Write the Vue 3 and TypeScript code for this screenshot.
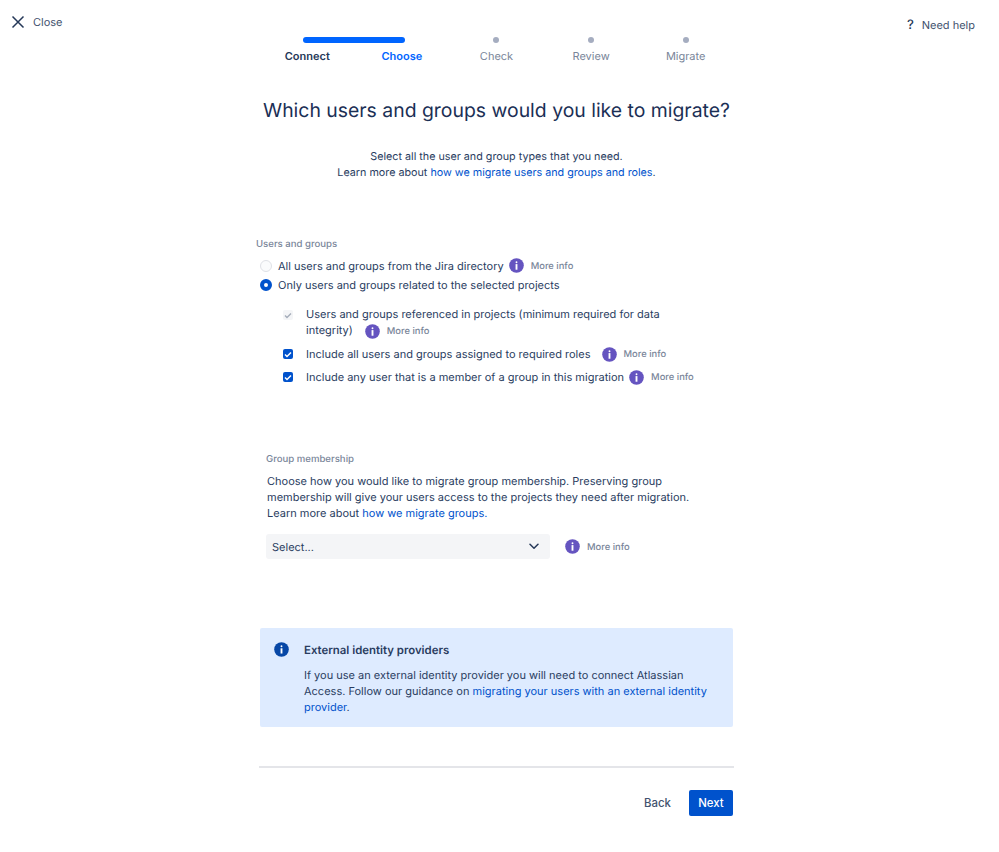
<script setup lang="ts">
const steps = [
  { label: 'Connect', state: 'done' },
  { label: 'Choose', state: 'current' },
  { label: 'Check', state: 'todo' },
  { label: 'Review', state: 'todo' },
  { label: 'Migrate', state: 'todo' },
]
</script>

<template>
  <div class="page">
    <header class="top">
      <a class="close">
        <svg width="14" height="14" viewBox="0 0 14 14"><path d="M1.5 1.5l11 11M12.5 1.5l-11 11" stroke="#253858" stroke-width="1.5" fill="none" /></svg>
        <span>Close</span>
      </a>
      <div class="stepper">
        <div class="track"></div>
        <div v-for="s in steps" :key="s.label" class="step" :class="s.state">
          <i class="dot"></i>
          <span>{{ s.label }}</span>
        </div>
      </div>
      <a class="help"><span class="q">?</span><span>Need help</span></a>
    </header>

    <main class="col">
      <h1>Which users and groups would you like to migrate?</h1>
      <p class="intro">Select all the user and group types that you need.<br />Learn more about <a>how we migrate users and groups and roles</a>.</p>

      <section class="users">
        <div class="label">Users and groups</div>
        <div class="radio-row first">
          <i class="radio"></i>
          <span>All users and groups from the Jira directory</span>
          <span class="info gap-r low"><svg width="15" height="15" viewBox="0 0 16 16"><circle cx="8" cy="8" r="7.8" fill="#6554c0" /><rect x="7" y="3.5" width="2" height="2" rx="1" fill="#fff" /><rect x="7" y="6.5" width="2" height="6" fill="#fff" /></svg><b>More info</b></span>
        </div>
        <div class="radio-row">
          <i class="radio on"></i>
          <span>Only users and groups related to the selected projects</span>
        </div>
        <div class="check-row ref">
          <i class="check off"><svg width="8" height="7" viewBox="0 0 8 7"><path d="M1 3.5l2 2 4-4" stroke="#a5adba" stroke-width="1.4" fill="none" /></svg></i>
          <div>Users and groups referenced in projects (minimum required for data<br />integrity)<span class="info gap-i low"><svg width="15" height="15" viewBox="0 0 16 16"><circle cx="8" cy="8" r="7.8" fill="#6554c0" /><rect x="7" y="3.5" width="2" height="2" rx="1" fill="#fff" /><rect x="7" y="6.5" width="2" height="6" fill="#fff" /></svg><b>More info</b></span></div>
        </div>
        <div class="check-row r2">
          <i class="check"><svg width="8" height="7" viewBox="0 0 8 7"><path d="M1 3.5l2 2 4-4" stroke="#fff" stroke-width="1.5" fill="none" /></svg></i>
          <span>Include all users and groups assigned to required roles</span>
          <span class="info gap-a"><svg width="15" height="15" viewBox="0 0 16 16"><circle cx="8" cy="8" r="7.8" fill="#6554c0" /><rect x="7" y="3.5" width="2" height="2" rx="1" fill="#fff" /><rect x="7" y="6.5" width="2" height="6" fill="#fff" /></svg><b>More info</b></span>
        </div>
        <div class="check-row r3">
          <i class="check"><svg width="8" height="7" viewBox="0 0 8 7"><path d="M1 3.5l2 2 4-4" stroke="#fff" stroke-width="1.5" fill="none" /></svg></i>
          <span>Include any user that is a member of a group in this migration</span>
          <span class="info gap-b"><svg width="15" height="15" viewBox="0 0 16 16"><circle cx="8" cy="8" r="7.8" fill="#6554c0" /><rect x="7" y="3.5" width="2" height="2" rx="1" fill="#fff" /><rect x="7" y="6.5" width="2" height="6" fill="#fff" /></svg><b>More info</b></span>
        </div>
      </section>

      <section class="groups">
        <div class="label">Group membership</div>
        <p>Choose how you would like to migrate group membership. Preserving group<br />membership will give your users access to the projects they need after migration.<br />Learn more about <a>how we migrate groups.</a></p>
        <div class="select-row">
          <div class="select">
            <span>Select...</span>
            <svg width="10" height="7" viewBox="0 0 10 7"><path d="M1 1.2L5 5.2l4-4" stroke="#253858" stroke-width="1.5" fill="none" stroke-linecap="round" stroke-linejoin="round" /></svg>
          </div>
          <span class="info low"><svg width="15" height="15" viewBox="0 0 16 16"><circle cx="8" cy="8" r="7.8" fill="#6554c0" /><rect x="7" y="3.5" width="2" height="2" rx="1" fill="#fff" /><rect x="7" y="6.5" width="2" height="6" fill="#fff" /></svg><b>More info</b></span>
        </div>
      </section>

      <section class="banner">
        <svg class="b-icon" width="15" height="15" viewBox="0 0 16 16"><circle cx="8" cy="8" r="7.8" fill="#0747a6" /><rect x="7" y="3.5" width="2" height="2" rx="1" fill="#fff" /><rect x="7" y="6.7" width="2" height="5.6" fill="#fff" /></svg>
        <div>
          <h2>External identity providers</h2>
          <p>If you use an external identity provider you will need to connect Atlassian<br />Access. Follow our guidance on <a>migrating your users with an external identity<br />provider</a>.</p>
        </div>
      </section>

      <footer class="foot">
        <button class="back">Back</button>
        <button class="next">Next</button>
      </footer>
    </main>
  </div>
</template>

<style>
html, body { margin: 0; background: #fff; }
</style>

<style scoped>
.page {
  height: 852px;
  overflow: hidden;
  font-family: Inter, "Liberation Sans", sans-serif;
  font-size: 11px;
  text-rendering: geometricPrecision;
  color: #2a3d5f;
  background: #fff;
}
.top {
  display: flex;
  padding: 0 24px 0 11px;
  height: 64px;
}
.close {
  display: flex;
  align-items: center;
  gap: 8px;
  height: 14px;
  margin-top: 15px;
  width: 249px;
  flex: none;
  color: #42526e;
}
.stepper {
  position: relative;
  display: flex;
  width: 473px;
  margin-top: 37px;
  margin-right: auto;
}
.track {
  position: absolute;
  left: 43px;
  top: 0;
  width: 102px;
  height: 6px;
  border-radius: 3px;
  background: #0065ff;
}
.step {
  width: 94.6px;
  display: flex;
  flex-direction: column;
  align-items: center;
  gap: 5px;
  line-height: 16px;
  color: #7a869a;
}
.dot {
  flex: none;
  width: 6px;
  height: 6px;
  border-radius: 50%;
  background: #a5adc0;
}
.step.done, .step.current { font-weight: 600; }
.step.done { color: #253858; }
.step.current { color: #0065ff; }
.step.done .dot, .step.current .dot { visibility: hidden; }
.help {
  display: flex;
  align-items: center;
  gap: 8px;
  height: 16px;
  margin-top: 17px;
  color: #42526e;
}
.q { font-weight: 500; font-size: 13px; color: #253858; }
.col {
  width: 473px;
  margin-left: 260px;
}
h1 {
  margin: 0;
  margin-top: 34px;
  text-align: center;
  font-size: 19.4px;
  line-height: 25px;
  font-weight: 400;
  color: #1b2f55;
  white-space: nowrap;
}
.intro {
  margin: 26px 0 0;
  text-align: center;
  line-height: 16px;
  font-size: 10.75px;
}
a { color: #0052cc; }
.users {
  margin-top: 57px;
  margin-left: -4px;
  white-space: nowrap;
}
.label {
  font-size: 9.6px;
  font-weight: 500;
  line-height: 14px;
  color: #7a869a;
}
.radio-row {
  display: flex;
  align-items: center;
  height: 19px;
  padding-left: 4px;
}
.radio-row.first { margin-top: 4px; }
.radio {
  width: 12px;
  height: 12px;
  box-sizing: border-box;
  border: 1.5px solid #dfe1e6;
  border-radius: 50%;
  background: #fafbfc;
  margin-right: 6px;
  flex: none;
}
.radio.on {
  border: 4px solid #0052cc;
  background: #fff;
}
.info {
  display: inline-flex;
  align-items: center;
  gap: 7px;
  vertical-align: middle;
}
.info b {
  font-size: 9.4px;
  font-weight: 500;
  color: #7a869a;
}
.info.low b { margin-top: 2px; }
.gap-r { margin-left: 5px; }
.gap-i { margin-left: 12px; }
.gap-a { margin-left: 11px; }
.gap-b { margin-left: 5px; }
.check-row {
  display: flex;
  align-items: center;
  padding-left: 27px;
}
.check-row.ref {
  align-items: flex-start;
  margin-top: 12px;
  line-height: 16px;
}
.check-row.ref .check { margin-top: 4px; }
.r2 { margin-top: 5px; height: 18px; }
.r3 { margin-top: 5px; height: 18px; }
.check {
  width: 10px;
  height: 10px;
  border-radius: 2px;
  background: #0052cc;
  display: flex;
  align-items: center;
  justify-content: center;
  margin-right: 13px;
  flex: none;
}
.check.off { background: #f4f5f7; }
.groups { margin-top: 67px; margin-left: 6px; white-space: nowrap; }
.groups p { margin: 6px 0 0 1px; line-height: 16px; }
.select-row {
  display: flex;
  align-items: center;
  margin-top: 13px;
  gap: 15px;
}
.select {
  width: 284px;
  height: 25px;
  box-sizing: border-box;
  background: #f4f5f7;
  border-radius: 3px;
  padding: 0 11px 0 6px;
  display: flex;
  align-items: center;
  justify-content: space-between;
}
.banner {
  margin-top: 69px;
  height: 99px;
  box-sizing: border-box;
  background: #deebff;
  border-radius: 2px;
  display: flex;
  gap: 15px;
  padding: 14px;
  white-space: nowrap;
}
.b-icon { flex: none; }
h2 {
  margin: 0;
  font-size: 11.4px;
  font-weight: 600;
  line-height: 16px;
}
.banner p { margin: 9px 0 0; line-height: 16px; }
.foot {
  margin: 39px -1px 0;
  border-top: 2px solid #e4e5e9;
  padding: 22px 1px 0 0;
  display: flex;
  justify-content: flex-end;
  align-items: center;
  gap: 18px;
}
button {
  font: inherit;
  border: 0;
  background: none;
  padding: 0;
}
.back { color: #42526e; font-weight: 500; font-size: 11.4px; }
.next {
  width: 44px;
  height: 26px;
  background: #0052cc;
  color: #fff;
  font-weight: 500;
  font-size: 11.4px;
  border-radius: 2px;
}
</style>
